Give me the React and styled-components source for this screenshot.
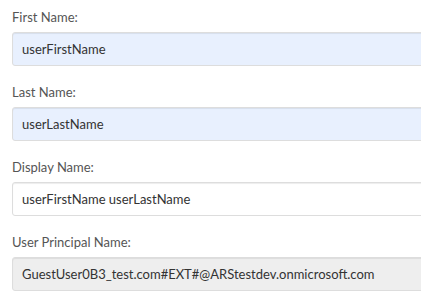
import React from "react"
import styled, { createGlobalStyle } from "styled-components"

const GlobalStyle = createGlobalStyle`
  html, body {
    margin: 0;
    padding: 0;
    background: #fff;
    overflow: hidden;
  }
  body {
    font-family: Lato, "Open Sans", sans-serif;
  }
`

const Page = styled.div`
  width: 100%;
  overflow: hidden;
`

const Form = styled.form`
  width: 460px;
  padding: 7px 0 0 12px;
`

const Group = styled.div`
  display: flex;
  flex-direction: column;
  margin-bottom: 16px;
`

const Label = styled.label`
  font-size: 13px;
  line-height: 20px;
  color: #555;
  margin-bottom: 5px;
`

const backgrounds = {
  autofill: "#e8f0fe",
  plain: "#fff",
  disabled: "#eee",
}

const Input = styled.input`
  box-sizing: border-box;
  width: 100%;
  height: 34px;
  padding: 6px 9px;
  font-family: inherit;
  font-size: 13px;
  color: #333;
  background: ${(p) => backgrounds[p.$variant]};
  border: 1px solid #ddd;
  border-radius: 3px;
  box-shadow: inset 0 1px 1px rgba(0, 0, 0, 0.075);
  outline: none;
  opacity: 1;
`

const fields = [
  { label: "First Name:", value: "userFirstName", variant: "autofill" },
  { label: "Last Name:", value: "userLastName", variant: "autofill" },
  { label: "Display Name:", value: "userFirstName userLastName", variant: "plain" },
  {
    label: "User Principal Name:",
    value: "GuestUser0B3_test.com#EXT#@ARStestdev.onmicrosoft.com",
    variant: "disabled",
  },
]

const App = () => (
  <Page>
    <GlobalStyle />
    <Form>
      {fields.map((f) => (
        <Group key={f.label}>
          <Label>{f.label}</Label>
          <Input
            $variant={f.variant}
            defaultValue={f.value}
            readOnly
            disabled={f.variant === "disabled"}
          />
        </Group>
      ))}
    </Form>
  </Page>
)

export default App
